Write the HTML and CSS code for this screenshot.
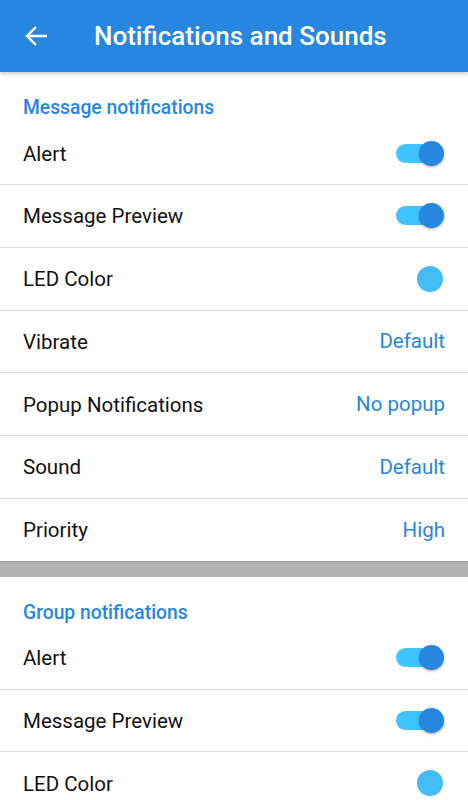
FILE: index.html
```html
<!DOCTYPE html>
<html lang="en">
<head>
    <meta charset="UTF-8">
    <meta name="viewport" content="width=device-width, initial-scale=1.0">
    <title>Notifications and Sounds</title>
    <link rel="stylesheet" href="styles.css">
</head>
<body>
    <div class="app-bar">
        <svg class="back" width="24" height="22" viewBox="0 0 24 22">
            <path d="M23 11H3M12 2L3 11l9 9" fill="none" stroke="#fff" stroke-width="2.4"/>
        </svg>
        <h1>Notifications and Sounds</h1>
    </div>
    <div class="content">
        <div class="section">
            <div class="section-title">Message notifications</div>
            <div class="row"><span>Alert</span><span class="toggle on"></span></div>
            <div class="row"><span>Message Preview</span><span class="toggle on"></span></div>
            <div class="row"><span>LED Color</span><span class="led"></span></div>
            <div class="row"><span>Vibrate</span><span class="value">Default</span></div>
            <div class="row"><span>Popup Notifications</span><span class="value">No popup</span></div>
            <div class="row"><span>Sound</span><span class="value">Default</span></div>
            <div class="row"><span>Priority</span><span class="value">High</span></div>
        </div>
        <div class="divider"></div>
        <div class="section">
            <div class="section-title">Group notifications</div>
            <div class="row"><span>Alert</span><span class="toggle on"></span></div>
            <div class="row"><span>Message Preview</span><span class="toggle on"></span></div>
            <div class="row"><span>LED Color</span><span class="led"></span></div>
        </div>
    </div>
</body>
</html>
```
FILE: styles.css
```css
body {
    font-family: Roboto, "Noto Sans", sans-serif;
    margin: 0;
    padding: 0;
    background-color: #fff;
    color: #111;
}
.app-bar {
    position: relative;
    z-index: 1;
    height: 72px;
    display: flex;
    align-items: center;
    background-color: #2787e0;
    box-shadow: 0 2px 4px rgba(0, 0, 0, 0.2);
}
.back {
    margin-left: 24px;
}
.app-bar h1 {
    margin: 0 0 0 46px;
    font-size: 26px;
    font-weight: 500;
    color: #fff;
}
.content {
    height: 728px;
    overflow: hidden;
}
.section-title {
    box-sizing: border-box;
    height: 50.25px;
    padding: 24px 23px 0;
    font-size: 19.3px;
    font-weight: 500;
    color: #2787e0;
}
.row {
    height: 61.75px;
    display: flex;
    align-items: center;
    justify-content: space-between;
    padding: 0 23px;
    font-size: 20.5px;
    border-bottom: 1px solid #dcdcdc;
}
.row:last-child {
    border-bottom: none;
}
.row span:first-child {
    padding-top: 1px;
}
.value {
    color: #2787d8;
}
.toggle {
    position: relative;
    width: 40px;
    height: 19px;
    margin-right: 9px;
    border-radius: 10px;
    background-color: #40c4ff;
}
.toggle.on::after {
    content: "";
    position: absolute;
    left: 23px;
    top: -3px;
    width: 25px;
    height: 25px;
    border-radius: 50%;
    background-color: #2787e0;
    box-shadow: 0 1px 3px rgba(0, 0, 0, 0.35);
}
.led {
    width: 26px;
    height: 26px;
    margin-right: 2px;
    border-radius: 50%;
    background-color: #42bdf8;
}
.divider {
    height: 15px;
    background-color: #b3b3b3;
    border-top: 1px solid #999;
}
```
